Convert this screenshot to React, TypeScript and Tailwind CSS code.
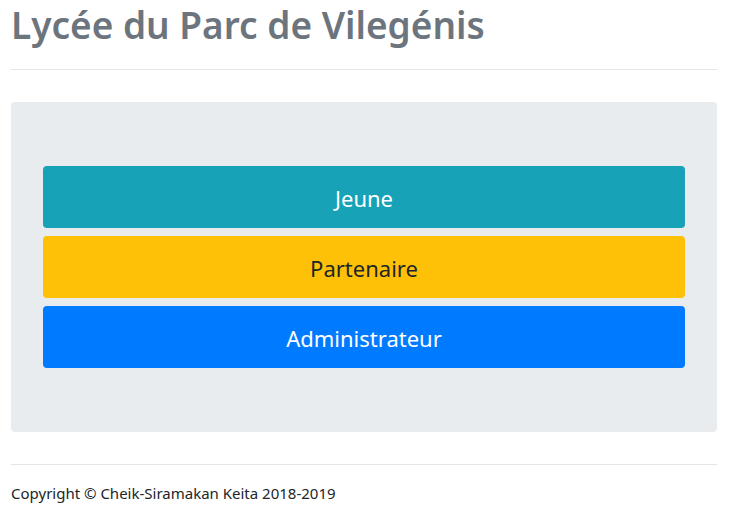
export default function App() {
  return (
    <div className="min-h-[510px] bg-white px-[11px] pr-[12px]" style={{ fontFamily: '"Noto Sans", "Open Sans", sans-serif' }}>
      <h1 className="m-0 pt-[1px] text-[37px] font-semibold leading-[47px] text-[#6c757d]">Lycée du Parc de Vilegénis</h1>
      <div className="mt-[21px] h-px bg-[#e5e5e5]" />
      <div className="mt-[32px] flex flex-col gap-[8px] rounded-[4px] bg-[#e9ecef] px-[32px] py-[64px]">
        <div className="flex h-[62px] items-center justify-center rounded-[4px] bg-[#17a2b8] pt-[3px] text-[22px] text-white">Jeune</div>
        <div className="flex h-[62px] items-center justify-center rounded-[4px] bg-[#ffc107] pt-[3px] text-[22px] text-[#212529]">Partenaire</div>
        <div className="flex h-[62px] items-center justify-center rounded-[4px] bg-[#007bff] pt-[3px] text-[22px] text-white">Administrateur</div>
      </div>
      <div className="mt-[32px] h-px bg-[#e5e5e5]" />
      <p className="m-0 mt-[18px] text-[15px] leading-[21px] text-[#212529]">Copyright © Cheik-Siramakan Keita 2018-2019</p>
    </div>
  );
}
